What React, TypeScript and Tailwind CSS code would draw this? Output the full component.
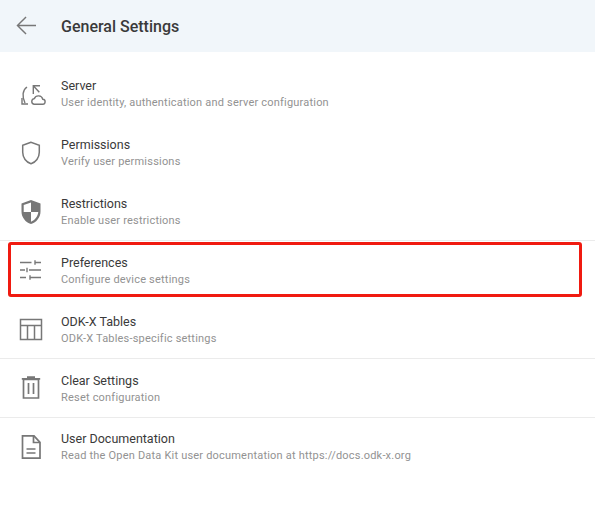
import React from "react";

const I = ({ children }: { children: React.ReactNode }) => (
  <svg viewBox="0 0 24 24" className="w-[24px] h-[24px] overflow-visible" fill="none" stroke="#777777" strokeWidth="1.4">
    {children}
  </svg>
);

const rows: { title: string; sub: string; line: boolean; icon: React.ReactNode }[] = [
  {
    title: "Server",
    sub: "User identity, authentication and server configuration",
    line: false,
    icon: (
      <I>
        <path d="M8 5C3.500 8 2.800 14.500 6 21" />
        <path d="M3 16v6h6" />
        <path d="M14.300 12V3.800H21M14.300 3.800l6 6.500" />
        <path d="M15 22.300h8.400a2.500 2.500 0 0 0 .4-5 4.500 4.500 0 0 0-8.500-.7 2.900 2.900 0 0 0-.3 5.700z" />
      </I>
    ),
  },
  {
    title: "Permissions",
    sub: "Verify user permissions",
    line: false,
    icon: (
      <I>
        <path d="M12 1.200 3.700 4.300v7c0 5.300 3.500 10 8.300 11.400 4.800-1.400 8.300-6.100 8.300-11.400v-7z" strokeWidth="1.500" />
      </I>
    ),
  },
  {
    title: "Restrictions",
    sub: "Enable user restrictions",
    line: true,
    icon: (
      <I>
        <path
          d="M12 0 2.500 3.500v8c0 5.800 4 11 9.500 12.500 5.500-1.500 9.500-6.700 9.500-12.500v-8zm0 12h7.300c-.6 4.500-3.500 8.400-7.300 9.700V12H4.700V5L12 2.400z"
          fill="#777777"
          stroke="none"
        />
      </I>
    ),
  },
  {
    title: "Preferences",
    sub: "Configure device settings",
    line: false,
    icon: (
      <I>
        <path d="M1 4.500h11.500M16 4.500h6M16 2.300v4.400" />
        <path d="M1 12h5M10 12h12M8 9.700v4.600" />
        <path d="M1 19.500h6M11 19.500h11M11 17.300v4.400" />
      </I>
    ),
  },
  {
    title: "ODK-X Tables",
    sub: "ODK-X Tables-specific settings",
    line: true,
    icon: (
      <I>
        <path d="M1.500 2.500h21v20h-21zM1.500 8.500h21M8.500 8.500v14M15.500 8.500v14" strokeWidth="1.500" />
      </I>
    ),
  },
  {
    title: "Clear Settings",
    sub: "Reset configuration",
    line: true,
    icon: (
      <I>
        <path d="M4.500 3.500h15v18.500h-15zM2.800 2.800h18.400M8 1.200h8" strokeWidth="1.700" />
        <path d="M9.500 7v11M14.500 7v11" strokeWidth="1.700" />
      </I>
    ),
  },
  {
    title: "User Documentation",
    sub: "Read the Open Data Kit user documentation at https://docs.odk-x.org",
    line: false,
    icon: (
      <I>
        <path d="M3.500 0.800h11.500l6 6.500v15.900H3.500z" strokeWidth="1.700" />
        <path d="M14.500 0.800v6.700H21M7.500 14h9M7.500 18h9" strokeWidth="1.700" />
      </I>
    ),
  },
];

export default function App() {
  return (
    <div className="relative w-[595px] h-[532px] bg-white overflow-hidden font-['Roboto',sans-serif]">
      <header className="h-[52px] bg-[#f1f6fa] flex items-center pl-[16px]">
        <svg viewBox="0 0 22 20" className="w-[21px] h-[19px] mt-[-1px]" fill="none" stroke="#777777" strokeWidth="1.500">
          <path d="M21 10H1.500M10.500 1 1.500 10l9 9" />
        </svg>
        <h1 className="ml-[24px] mt-[2px] text-[16px] leading-[20px] font-medium text-[#3a3a3a]">General Settings</h1>
      </header>
      <div className="pt-[12.5px]">
        {rows.map((r) => (
          <div key={r.title} className="relative h-[58.85px] flex items-center pl-[19px]">
            <div className="w-[24px] h-[24px] shrink-0">{r.icon}</div>
            <div className="ml-[18px] mt-[1px]">
              <div className="text-[12.5px] leading-[17px] text-[#3a3a3a]">{r.title}</div>
              <div className="text-[11px] leading-[16px] mt-[1px] tracking-[0.2px] text-[#929292]">{r.sub}</div>
            </div>
            {r.line && <div className="absolute left-0 right-0 bottom-0 h-px bg-[#ebebeb]" />}
          </div>
        ))}
      </div>
      <div className="absolute left-[8px] top-[242px] w-[574px] h-[55px] rounded-[3px] border-[3px] border-[#f01a10]" />
    </div>
  );
}
